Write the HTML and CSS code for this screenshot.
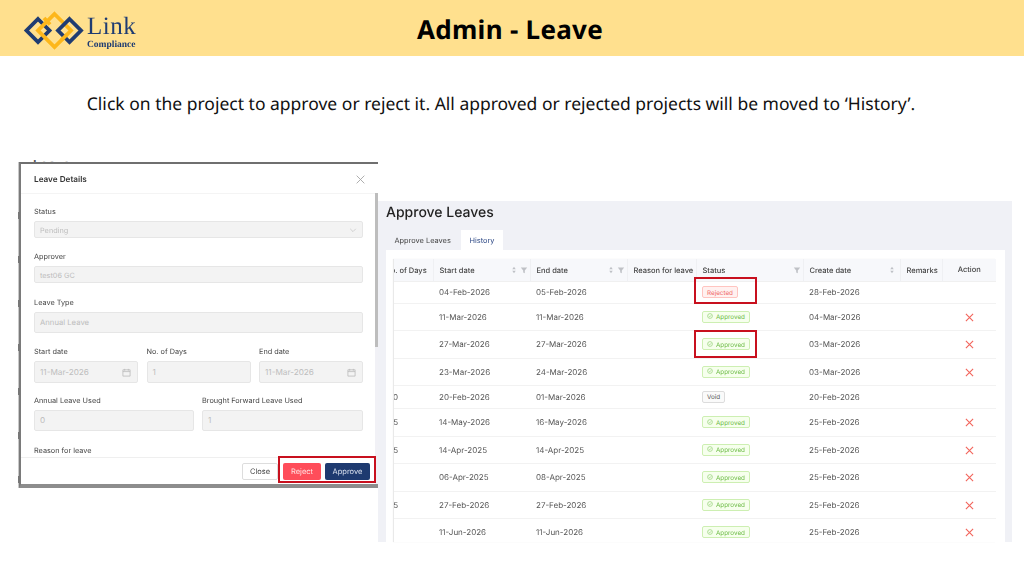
FILE: index.html
```html
<!DOCTYPE html>
<html lang="en">
<head>
<meta charset="utf-8">
<title>Admin - Leave</title>
<link rel="stylesheet" href="styles.css">
</head>
<body>
<svg class="defs" width="0" height="0" aria-hidden="true">
  <symbol id="x" viewBox="0 0 10 10"><path d="M1 1 9 9M9 1 1 9" fill="none" stroke="#f2655c" stroke-width="1.250"/></symbol>
  <symbol id="ok" viewBox="0 0 10 10"><circle cx="5" cy="5" r="4" fill="none" stroke="#7cc35a" stroke-width=".9"/><path d="M3 5.100 4.500 6.500 7 3.700" fill="none" stroke="#7cc35a" stroke-width=".9"/></symbol>
  <symbol id="cal" viewBox="0 0 10 10"><path d="M1 2h8v7H1zM1 4h8M3 1v2M7 1v2" fill="none" stroke="#b5b5b5" stroke-width=".8"/></symbol>
  <symbol id="funnel" viewBox="0 0 10 10"><path d="M1 2h8L6 5.500V9L4 8V5.500z" fill="#bfc1c6"/></symbol>
  <symbol id="sort" viewBox="0 0 10 10"><path d="M5 1 7.200 4H2.800zM5 9 2.800 6H7.200z" fill="#bfc1c6"/></symbol>
</svg>

<div class="slide">
  <header class="banner">
    <div class="brand">
      <svg class="brand-mark" viewBox="0 0 62 41" aria-hidden="true">
        <g fill="none" stroke-width="3.800">
          <path d="M15 9 26.500 20.500 15 32 3.500 20.500z" stroke="#1f3c72"/>
          <path d="M31.500 4 48 20.500 31.500 37 15 20.500z" stroke="#fdb71b"/>
          <path d="M46.500 9 58 20.500 46.500 32 35 20.500z" stroke="#1f3c72"/>
          <path d="M21 8 27 14.500" stroke="#fdb71b" stroke-width="3.800"/>
          <path d="M38.500 30 44 24.500" stroke="#fdb71b" stroke-width="3.800"/>
        </g>
      </svg>
      <div class="brand-text">
        <span class="brand-name">Link</span>
        <span class="brand-sub">Compliance</span>
      </div>
    </div>
    <h1 class="banner-title">Admin - Leave</h1>
  </header>

  <p class="lead">Click on the project to approve or reject it. All approved or rejected projects will be moved to ‘History’.</p>

  <section class="shot shot-modal">
    <div class="peek">Leave</div>
    <div class="edge-ticks"><i></i><i></i><i></i><i></i><i></i><i></i><i></i></div>
    <div class="modal-head">
      <span class="modal-title">Leave Details</span>
      <span class="modal-close">
        <svg viewBox="0 0 10 10" aria-hidden="true"><path d="M1.500 1.500 8.500 8.500M8.500 1.500 1.500 8.500" fill="none" stroke="#a3a3a3" stroke-width=".8"/></svg>
      </span>
    </div>
    <div class="modal-wrap">
      <div class="modal-main">
        <div class="modal-body">
          <div class="field">
            <label class="lbl">Status</label>
            <div class="inp inp-s">Pending
              <svg class="chev" viewBox="0 0 10 10" aria-hidden="true"><path d="M1.500 3.500 5 7 8.500 3.500" fill="none" stroke="#bdbdbd" stroke-width=".8"/></svg>
            </div>
          </div>
          <div class="field field-tall">
            <label class="lbl">Approver</label>
            <div class="inp inp-s">test06 GC</div>
          </div>
          <div class="field">
            <label class="lbl">Leave Type</label>
            <div class="inp inp-m">Annual Leave</div>
          </div>
          <div class="cols-3">
            <div class="field">
              <label class="lbl">Start date</label>
              <div class="inp inp-l">11-Mar-2026<svg class="cal"><use href="#cal"/></svg></div>
            </div>
            <div class="field">
              <label class="lbl">No. of Days</label>
              <div class="inp inp-l">1</div>
            </div>
            <div class="field">
              <label class="lbl">End date</label>
              <div class="inp inp-l">11-Mar-2026<svg class="cal"><use href="#cal"/></svg></div>
            </div>
          </div>
          <div class="cols-2">
            <div class="field">
              <label class="lbl">Annual Leave Used</label>
              <div class="inp inp-l">0</div>
            </div>
            <div class="field">
              <label class="lbl">Brought Forward Leave Used</label>
              <div class="inp inp-l">1</div>
            </div>
          </div>
          <label class="lbl">Reason for leave</label>
        </div>
        <div class="modal-foot">
          <span class="btn btn-close">Close</span>
          <span class="btn btn-reject">Reject</span>
          <span class="btn btn-approve">Approve</span>
        </div>
      </div>
      <div class="scroll-track"><div class="scroll-thumb"></div></div>
    </div>
    <div class="mark mark-foot"></div>
  </section>

  <section class="shot shot-table">
    <h2 class="page-title">Approve Leaves</h2>
    <div class="tabs">
      <span class="tab">Approve Leaves</span>
      <span class="tab tab-on">History</span>
    </div>
    <div class="card">
      <div class="table-clip">
        <table class="tbl">
          <colgroup>
            <col class="c-days"><col class="c-date"><col class="c-date"><col class="c-reason"><col class="c-status"><col class="c-date"><col class="c-remarks"><col class="c-action">
          </colgroup>
          <thead>
            <tr class="h22">
              <th class="th-days">No. of Days</th>
              <th><div class="th-in"><span>Start date</span><svg class="ic"><use href="#sort"/></svg><svg class="ic"><use href="#funnel"/></svg></div></th>
              <th><div class="th-in"><span>End date</span><svg class="ic"><use href="#sort"/></svg><svg class="ic"><use href="#funnel"/></svg></div></th>
              <th>Reason for leave</th>
              <th><div class="th-in"><span>Status</span><svg class="ic"><use href="#funnel"/></svg></div></th>
              <th><div class="th-in th-in-wide"><span>Create date</span><svg class="ic"><use href="#sort"/></svg></div></th>
              <th>Remarks</th>
              <th class="center">Action</th>
            </tr>
          </thead>
          <tbody>
            <tr class="h22"><td class="days"></td><td>04-Feb-2026</td><td>05-Feb-2026</td><td></td><td><span class="tag tag-red">Rejected</span></td><td>28-Feb-2026</td><td></td><td></td></tr>
            <tr class="h27"><td class="days"></td><td>11-Mar-2026</td><td>11-Mar-2026</td><td></td><td><span class="tag tag-green"><svg class="tag-ic"><use href="#ok"/></svg>Approved</span></td><td>04-Mar-2026</td><td></td><td class="center"><svg class="del"><use href="#x"/></svg></td></tr>
            <tr class="h28"><td class="days"></td><td>27-Mar-2026</td><td>27-Mar-2026</td><td></td><td><span class="tag tag-green"><svg class="tag-ic"><use href="#ok"/></svg>Approved</span></td><td>03-Mar-2026</td><td></td><td class="center"><svg class="del"><use href="#x"/></svg></td></tr>
            <tr class="h27"><td class="days"></td><td>23-Mar-2026</td><td>24-Mar-2026</td><td></td><td><span class="tag tag-green"><svg class="tag-ic"><use href="#ok"/></svg>Approved</span></td><td>03-Mar-2026</td><td></td><td class="center"><svg class="del"><use href="#x"/></svg></td></tr>
            <tr class="h23"><td class="days">10</td><td>20-Feb-2026</td><td>01-Mar-2026</td><td></td><td><span class="tag tag-grey">Void</span></td><td>20-Feb-2026</td><td></td><td></td></tr>
            <tr class="h28"><td class="days">1.5</td><td>14-May-2026</td><td>16-May-2026</td><td></td><td><span class="tag tag-green"><svg class="tag-ic"><use href="#ok"/></svg>Approved</span></td><td>25-Feb-2026</td><td></td><td class="center"><svg class="del"><use href="#x"/></svg></td></tr>
            <tr class="h27"><td class="days">0.5</td><td>14-Apr-2025</td><td>14-Apr-2025</td><td></td><td><span class="tag tag-green"><svg class="tag-ic"><use href="#ok"/></svg>Approved</span></td><td>25-Feb-2026</td><td></td><td class="center"><svg class="del"><use href="#x"/></svg></td></tr>
            <tr class="h28"><td class="days"></td><td>06-Apr-2025</td><td>08-Apr-2025</td><td></td><td><span class="tag tag-green"><svg class="tag-ic"><use href="#ok"/></svg>Approved</span></td><td>25-Feb-2026</td><td></td><td class="center"><svg class="del"><use href="#x"/></svg></td></tr>
            <tr class="h27"><td class="days">0.5</td><td>27-Feb-2026</td><td>27-Feb-2026</td><td></td><td><span class="tag tag-green"><svg class="tag-ic"><use href="#ok"/></svg>Approved</span></td><td>25-Feb-2026</td><td></td><td class="center"><svg class="del"><use href="#x"/></svg></td></tr>
            <tr class="h28"><td class="days"></td><td>11-Jun-2026</td><td>11-Jun-2026</td><td></td><td><span class="tag tag-green"><svg class="tag-ic"><use href="#ok"/></svg>Approved</span></td><td>25-Feb-2026</td><td></td><td class="center"><svg class="del"><use href="#x"/></svg></td></tr>
          </tbody>
        </table>
      </div>
    </div>
    <div class="mark mark-rej"></div>
    <div class="mark mark-app"></div>
  </section>
</div>
</body>
</html>
```

FILE: styles.css
```css
* { box-sizing: border-box; }
html, body { margin: 0; padding: 0; }
body { width: 1024px; height: 576px; overflow: hidden; background: #fff; font-family: "Inter", "Liberation Sans", sans-serif; text-rendering: geometricPrecision; }
.defs { position: absolute; }
.slide { position: relative; width: 1024px; height: 576px; overflow: hidden; background: #fff; }

/* banner */
.banner { position: relative; height: 56px; padding-top: 2px; background: #ffe08e; display: flex; align-items: center; justify-content: center; }
.banner-title { margin: 0 4px 0 0; font: 700 26px/1 "Noto Sans", sans-serif; letter-spacing: .3px; color: #000; }
.brand { position: absolute; left: 23px; top: 10px; display: flex; filter: blur(.4px); }
.brand-mark { width: 62px; height: 41px; }
.brand-text { display: flex; flex-direction: column; margin-left: 2px; color: #1f3c72; font-family: "Liberation Serif", serif; }
.brand-name { font-size: 25px; line-height: 26px; height: 26px; letter-spacing: .5px; margin-top: 4px; }
.brand-sub { font-size: 9.500px; line-height: 10px; font-weight: 700; }

.lead { margin: 37px 0 0; text-align: center; font: 400 17.500px/22px "Noto Sans", sans-serif; color: #111; padding-right: 22px; }

.shot { position: absolute; }
.mark { position: absolute; border: 2px solid #c8101e; }

/* modal screenshot */
.shot-modal { left: 19px; top: 162px; width: 359px; height: 326px; display: flex; flex-direction: column; background: #fff; border-top: 2px solid #6f6f6f; border-left: 2px solid #7a7a7a; border-bottom: 4px solid #8d8d8d; box-shadow: -1px 0 0 #c9c9c9; }
.peek { position: absolute; left: 12px; top: -4px; height: 2px; overflow: hidden; font-size: 13px; line-height: 10px; font-weight: 600; color: #555; }
.edge-ticks { position: absolute; left: -3px; top: 48px; display: flex; flex-direction: column; gap: 37px; }
.edge-ticks i { display: block; width: 2px; height: 7px; background: #777; }
.modal-head { height: 29px; flex: none; padding: 1px 10px 0 13px; display: flex; align-items: center; justify-content: space-between; filter: blur(.35px); }
.modal-title { font-size: 8.200px; font-weight: 600; color: #333; }
.modal-close { width: 11px; height: 11px; margin-right: 2px; }
.modal-close svg { display: block; width: 11px; height: 11px; }
.modal-wrap { flex: 1; display: flex; min-height: 0; }
.modal-main { flex: 1; min-width: 0; display: flex; flex-direction: column; border-top: 1px solid #f4f4f4; }
.modal-body { flex: 1; min-height: 0; padding: 12px 12px 0 13px; overflow: hidden; filter: blur(.35px); }
.field { margin-bottom: 13px; }
.field-tall { margin-bottom: 14px; }
.lbl { display: block; font-size: 7.300px; line-height: 10px; height: 11px; padding-top: 1px; color: #444; margin-bottom: 4px; white-space: nowrap; }
.inp { position: relative; display: flex; align-items: center; padding: 0 5px; background: #f3f3f3; border: 1px solid #e6e6e6; border-radius: 2px; font-size: 7.300px; color: #bdbdbd; }
.inp-s { height: 17px; padding-top: 1px; }
.inp-m { height: 21px; font-size: 7.700px; }
.inp-l { height: 21.500px; font-size: 8.200px; }
.chev { position: absolute; right: 5px; top: 4px; width: 8px; height: 8px; }
.cal { position: absolute; right: 6px; top: 6px; width: 9px; height: 9px; }
.cols-3 { display: grid; grid-template-columns: 104px 104px 104px; column-gap: 8.500px; margin-top: 9px; margin-bottom: -1px; }
.cols-2 { display: grid; grid-template-columns: 160px 161px; column-gap: 8px; margin-top: 0; margin-bottom: 1px; }
.modal-foot { flex: none; height: 27px; padding: 5px 5px 0 0; display: flex; justify-content: flex-end; border-top: 1px solid #efefef; filter: blur(.35px); }
.btn { height: 17px; border-radius: 2px; display: flex; align-items: center; justify-content: center; font-size: 7.500px; }
.btn-close { width: 36px; margin-right: 5px; background: #fff; border: 1px solid #ddd; color: #444; }
.btn-reject { width: 38px; margin-right: 4px; background: #ff4d5a; color: #ffe3e3; }
.btn-approve { width: 45px; background: #1e3a70; color: #d9e0ee; }
.scroll-track { flex: none; width: 3px; background: #f1f1f6; }
.scroll-thumb { height: 154px; background: #bdbdbd; }
.mark-foot { left: 257px; top: 292px; width: 98px; height: 27px; }

/* table screenshot */
.shot-table { left: 378px; top: 201px; width: 634px; height: 341px; background: #f0f1f6; padding: 4px 7px 0 8px; display: flex; flex-direction: column; }
.page-title { margin: 0; height: 25px; font-size: 14px; line-height: 16px; font-weight: 500; color: #222; filter: blur(.3px); }
.tabs { display: flex; height: 20px; flex: none; filter: blur(.3px); }
.tab { display: flex; align-items: center; padding: 0 0 0 8.500px; width: 75px; font-size: 7.400px; color: #444; white-space: nowrap; }
.tab-on { width: 42px; justify-content: center; padding: 0; background: #fff; color: #2f4a86; }
.card { flex: 1; min-height: 0; background: #fff; padding: 9px 9px 0 8px; }
.table-clip { height: 100%; overflow: hidden; filter: blur(.35px); box-shadow: -1px 0 1px #e9e9e9; }
.tbl { border-collapse: collapse; table-layout: fixed; width: 621px; margin-left: -19px; font-size: 8px; color: #555; }
.c-days { width: 58px; }
.c-date { width: 97px; }
.c-reason { width: 69px; }
.c-status { width: 107px; }
.c-remarks { width: 42px; }
.c-action { width: 54px; }
.h22 { height: 22px; }
.h23 { height: 23px; }
.h27 { height: 27px; }
.h28 { height: 28px; }
.tbl th { padding: 1px 2px 0 6px; background: #f7f8fb; border-right: 1px solid #eff0f3; text-align: left; font-size: 7.500px; font-weight: 500; color: #444; white-space: nowrap; overflow: hidden; }
.tbl th:last-child { border-right: 0; }
.tbl thead tr { border-bottom: 1px solid #f0f0f0; }
.tbl td { padding: 0 5px 0 6px; border-bottom: 1px solid #f2f2f2; white-space: nowrap; overflow: hidden; }
.tbl .center { text-align: center; padding: 0; }
.tbl .days { text-align: right; padding-right: 35px; }
.tbl .th-days { padding-left: 10px; }
.th-in { display: flex; align-items: center; gap: 2px; }
.th-in-wide { padding-right: 2px; }
.th-in span { flex: 1; }
.ic { width: 8px; height: 8px; flex: none; }
.tag { display: inline-flex; align-items: center; height: 12px; padding: 1px 4px 0; border: 1px solid; border-radius: 2px; font-size: 6.300px; vertical-align: middle; }
.tag-red { background: #fff1f0; border-color: #ffc4c0; color: #ef6a6a; }
.tag-green { background: #f6ffed; border-color: #cdefb2; color: #6cbb45; }
.tag-grey { background: #fafafa; border-color: #dcdcdc; color: #555; }
.tag-ic { width: 6px; height: 6px; margin: -2px 3px 0 0; }
.del { display: inline-block; width: 9px; height: 9px; vertical-align: middle; }
.mark-rej { left: 316px; top: 76px; width: 63px; height: 27px; }
.mark-app { left: 316px; top: 129px; width: 63px; height: 28px; }
```
